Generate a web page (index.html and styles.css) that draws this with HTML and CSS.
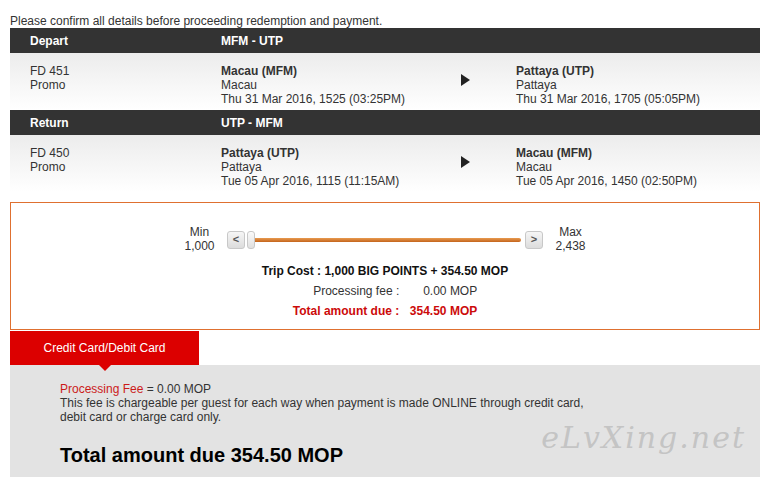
FILE: index.html
```html
<!DOCTYPE html>
<html lang="en">
<head>
    <meta charset="UTF-8">
    <title>Confirm booking</title>
    <link rel="stylesheet" href="styles.css">
</head>
<body>
    <div class="page">
        <p class="intro">Please confirm all details before proceeding redemption and payment.</p>

        <!-- depart leg -->
        <div class="leg-head">
            <span>Depart</span>
            <span>MFM - UTP</span>
        </div>
        <div class="leg">
            <div>FD 451<br>Promo</div>
            <div><b>Macau (MFM)</b><br>Macau<br>Thu 31 Mar 2016, 1525 (03:25PM)</div>
            <div class="arrow"></div>
            <div><b>Pattaya (UTP)</b><br>Pattaya<br>Thu 31 Mar 2016, 1705 (05:05PM)</div>
        </div>

        <!-- return leg -->
        <div class="leg-head">
            <span>Return</span>
            <span>UTP - MFM</span>
        </div>
        <div class="leg">
            <div>FD 450<br>Promo</div>
            <div><b>Pattaya (UTP)</b><br>Pattaya<br>Tue 05 Apr 2016, 1115 (11:15AM)</div>
            <div class="arrow"></div>
            <div><b>Macau (MFM)</b><br>Macau<br>Tue 05 Apr 2016, 1450 (02:50PM)</div>
        </div>

        <!-- points slider -->
        <div class="cost-box">
            <div class="slider-row">
                <div class="limit">Min<br>1,000</div>
                <div class="slider">
                    <span class="step">&lt;</span>
                    <div class="track"><span class="handle"></span></div>
                    <span class="step">&gt;</span>
                </div>
                <div class="limit">Max<br>2,438</div>
            </div>
            <p class="trip-cost">Trip Cost : 1,000 BIG POINTS + 354.50 MOP</p>
            <table class="fees">
                <tr>
                    <td class="label">Processing fee :</td>
                    <td class="value">0.00 MOP</td>
                </tr>
                <tr class="due">
                    <td class="label">Total amount due :</td>
                    <td class="value">354.50 MOP</td>
                </tr>
            </table>
        </div>

        <!-- payment -->
        <div class="tabs">
            <div class="tab active">Credit Card/Debit Card</div>
        </div>
        <div class="pay-panel">
            <p class="fee-note"><span class="red">Processing Fee</span> = 0.00 MOP<br>
            This fee is chargeable per guest for each way when payment is made ONLINE through credit card,<br>
            debit card or charge card only.</p>
            <h2 class="pay-total">Total amount due 354.50 MOP</h2>
            <span class="watermark">eLvXing.net</span>
        </div>
    </div>
</body>
</html>
```

FILE: styles.css
```css
body {
    margin: 0;
    background-color: #fff;
    font-family: "Liberation Sans", Arial, sans-serif;
    font-size: 12px;
    line-height: 14px;
    color: #333;
}
.page {
    padding: 14px 11px 0 10px;
}
.intro {
    margin: 0;
}
.leg-head {
    display: grid;
    grid-template-columns: 191px 1fr;
    height: 25px;
    align-items: center;
    padding-left: 20px;
    background-color: #333;
    color: #fff;
    font-weight: bold;
}
.leg {
    display: grid;
    grid-template-columns: 191px 240px 55px 1fr;
    padding: 11px 0 4px 20px;
    background: linear-gradient(#ececec, #fff);
}
.arrow {
    width: 0;
    height: 0;
    margin-top: 10px;
    border-left: 9px solid #222;
    border-top: 6.5px solid transparent;
    border-bottom: 6.5px solid transparent;
}
.cost-box {
    margin-top: 10px;
    border: 1px solid #df7030;
    padding: 22px 0 8px 0;
}
.slider-row {
    display: flex;
    justify-content: center;
    align-items: flex-start;
}
.limit {
    width: 31px;
    text-align: center;
}
.slider {
    display: flex;
    align-items: center;
    margin: 6px 12px 0 12px;
}
.step {
    width: 16px;
    height: 16px;
    border: 1px solid #c8c8c8;
    border-radius: 3px;
    background: linear-gradient(#f6f6f6, #dcdcdc);
    color: #555;
    font-weight: bold;
    font-size: 11px;
    line-height: 15px;
    text-align: center;
}
.track {
    position: relative;
    width: 274px;
    height: 4px;
    margin: 0 4px 0 2px;
    border-radius: 2px;
    background: linear-gradient(#e89a50, #c4641c);
}
.handle {
    position: absolute;
    left: 0;
    top: -7px;
    width: 6px;
    height: 16px;
    border: 1px solid #c8c8c8;
    border-radius: 3px;
    background: linear-gradient(#fafafa, #e0e0e0);
}
.trip-cost {
    margin: 8px 0 0 0;
    line-height: 20px;
    text-align: center;
    font-weight: bold;
    color: #111;
}
.fees {
    margin: 0 auto;
    border-collapse: collapse;
}
.fees td {
    padding: 0;
    line-height: 20px;
    text-align: right;
}
.fees .label {
    padding-right: 10px;
}
.fees .value {
    width: 68px;
}
.due {
    color: #cc0a0a;
    font-weight: bold;
}
.tabs {
    position: relative;
    z-index: 1;
    display: flex;
    margin-top: 1px;
}
.tab {
    position: relative;
    width: 189px;
    height: 34px;
    line-height: 34px;
    text-align: center;
    color: #fff;
}
.tab.active {
    background-color: #dc0000;
}
.tab.active:after {
    content: "";
    position: absolute;
    left: 89px;
    bottom: -6px;
    border-top: 6px solid #dc0000;
    border-left: 6px solid transparent;
    border-right: 6px solid transparent;
}
.pay-panel {
    position: relative;
    padding: 17px 0 22px 50px;
    background-color: #e3e3e3;
}
.fee-note {
    margin: 0;
}
.red {
    color: #cc1a1a;
}
.pay-total {
    margin: 19px 0 0 0;
    font-size: 20px;
    line-height: 24px;
    color: #000;
}
.watermark {
    position: absolute;
    right: 14px;
    top: 66px;
    font-family: "DejaVu Serif", serif;
    font-style: italic;
    font-size: 30px;
    letter-spacing: 2px;
    color: #c4c4c4;
}
```
